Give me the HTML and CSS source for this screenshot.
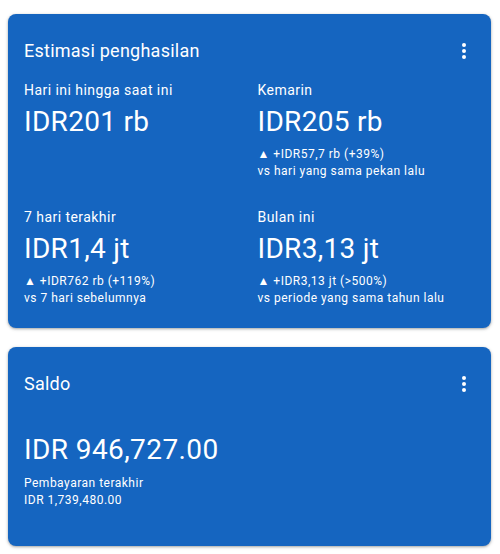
FILE: index.html
```html
<!DOCTYPE html>
<html lang="id">
<head>
<meta charset="utf-8">
<title>Estimasi penghasilan</title>
<link rel="stylesheet" href="styles.css">
</head>
<body>
<main class="page">
  <section class="card card-earnings">
    <header class="card-head">
      <h2 class="card-title">Estimasi penghasilan</h2>
      <button class="more" aria-label="Opsi lainnya">
        <svg viewBox="0 0 24 24" width="24" height="24"><circle cx="12" cy="6" r="2"/><circle cx="12" cy="12" r="2"/><circle cx="12" cy="18" r="2"/></svg>
      </button>
    </header>
    <div class="stats">
      <div class="stat">
        <div class="stat-label">Hari ini hingga saat ini</div>
        <div class="stat-value">IDR201 rb</div>
      </div>
      <div class="stat">
        <div class="stat-label">Kemarin</div>
        <div class="stat-value">IDR205 rb</div>
        <div class="stat-change">▲ +IDR57,7 rb (+39%)</div>
        <div class="stat-compare">vs hari yang sama pekan lalu</div>
      </div>
      <div class="stat">
        <div class="stat-label">7 hari terakhir</div>
        <div class="stat-value">IDR1,4 jt</div>
        <div class="stat-change">▲ +IDR762 rb (+119%)</div>
        <div class="stat-compare">vs 7 hari sebelumnya</div>
      </div>
      <div class="stat">
        <div class="stat-label">Bulan ini</div>
        <div class="stat-value">IDR3,13 jt</div>
        <div class="stat-change">▲ +IDR3,13 jt (&gt;500%)</div>
        <div class="stat-compare">vs periode yang sama tahun lalu</div>
      </div>
    </div>
  </section>

  <section class="card card-balance">
    <header class="card-head">
      <h2 class="card-title">Saldo</h2>
      <button class="more" aria-label="Opsi lainnya">
        <svg viewBox="0 0 24 24" width="24" height="24"><circle cx="12" cy="6" r="2"/><circle cx="12" cy="12" r="2"/><circle cx="12" cy="18" r="2"/></svg>
      </button>
    </header>
    <div class="balance-value">IDR 946,727.00</div>
    <div class="balance-note">Pembayaran terakhir</div>
    <div class="balance-note">IDR 1,739,480.00</div>
  </section>
</main>
</body>
</html>
```

FILE: styles.css
```css
* { box-sizing: border-box; }

html, body {
  margin: 0;
  padding: 0;
  background: #ffffff;
}

body {
  font-family: Roboto, "Liberation Sans", Arial, sans-serif;
  color: #ffffff;
}

.page {
  display: flex;
  flex-direction: column;
  gap: 19px;
  padding: 14px 9px 8px 8px;
}

.card {
  background: #1565c0;
  border-radius: 8px;
  box-shadow: 0 1px 2px rgba(60, 64, 67, 0.3), 0 1px 3px 1px rgba(60, 64, 67, 0.15);
  padding: 24px 16px 21px 16px;
}

.card-head {
  display: flex;
  align-items: center;
  justify-content: space-between;
  height: 26px;
}

.card-title {
  margin: 0;
  font-size: 18px;
  font-weight: 400;
  line-height: 26px;
  letter-spacing: 0.25px;
}

.more {
  display: flex;
  width: 24px;
  height: 24px;
  padding: 0;
  margin-right: -1px;
  border: 0;
  background: none;
  fill: #ffffff;
}

.stats {
  display: grid;
  grid-template-columns: 1fr 1fr;
  column-gap: 16px;
  row-gap: 27px;
  margin-top: 16px;
}

.stat-label {
  font-size: 14px;
  line-height: 20px;
  letter-spacing: 0.45px;
}

.stat-value {
  margin-top: 4px;
  font-size: 28px;
  line-height: 36px;
  letter-spacing: 0.3px;
}

.stat-change {
  margin-top: 6px;
  font-size: 12px;
  line-height: 17px;
  letter-spacing: 0.5px;
}

.stat-compare {
  font-size: 12px;
  line-height: 17px;
  letter-spacing: 0.5px;
}

.card-balance {
  padding-bottom: 37px;
}

.balance-value {
  margin-top: 35px;
  font-size: 28px;
  line-height: 36px;
  letter-spacing: 0.4px;
}

.balance-value + .balance-note {
  margin-top: 7px;
}

.balance-note {
  font-size: 12px;
  line-height: 17px;
  letter-spacing: 0.5px;
}
```
